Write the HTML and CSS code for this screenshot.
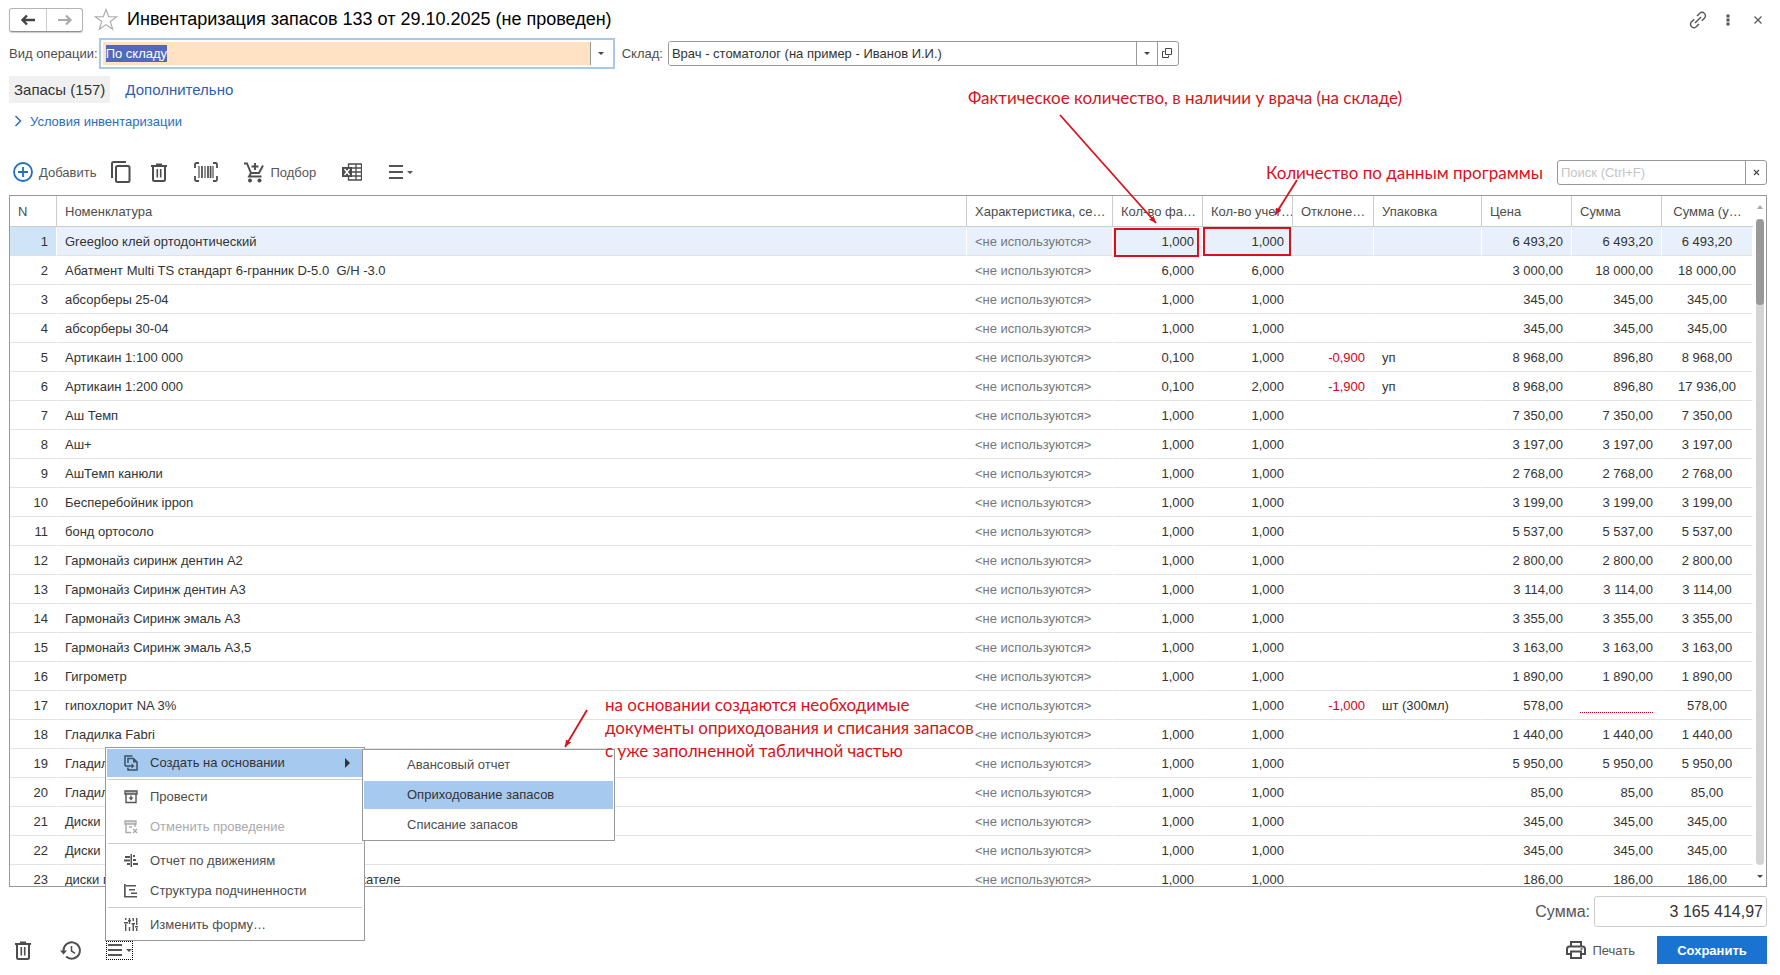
FILE: index.html
```html
<!DOCTYPE html>
<html lang="ru">
<head>
    <meta charset="UTF-8">
    <meta name="viewport" content="width=device-width, initial-scale=1.0">
    <title>Инвентаризация запасов</title>
    <link rel="stylesheet" href="styles.css">
</head>
<body>
<header class="title-bar">
    <div class="nav-buttons">
        <button type="button" aria-label="Назад">
            <svg width="16" height="12" viewBox="0 0 16 12"><path d="M15 6H3M7 1.5L2.5 6L7 10.5" fill="none" stroke="#444" stroke-width="2.4"/></svg>
        </button>
        <button type="button" aria-label="Вперед">
            <svg width="16" height="12" viewBox="0 0 16 12"><path d="M1 6h12M9 1.5L13.5 6L9 10.5" fill="none" stroke="#aaa" stroke-width="2.2"/></svg>
        </button>
    </div>
    <button type="button" class="icon-button star" aria-label="Избранное">
        <svg width="24" height="23" viewBox="0 0 24 23"><path d="M12 1.5l2.7 7.3h8l-6.4 4.7 2.4 7.8L12 16.6l-6.7 4.7 2.4-7.8L1.3 8.8h8z" fill="#fff" stroke="#aaa" stroke-width="1.1"/></svg>
    </button>
    <h1>Инвентаризация запасов 133 от 29.10.2025 (не проведен)</h1>
    <div class="window-buttons">
        <button type="button" class="icon-button" aria-label="Ссылка">
            <svg width="18" height="18" viewBox="0 0 18 18" fill="none" stroke="#555" stroke-width="1.4"><path d="M6 12l6-6M8 5l2.6-2.6a3.2 3.2 0 0 1 4.8 0a3.2 3.2 0 0 1 0 4.8L12.8 9.8M10 13l-2.6 2.6a3.2 3.2 0 0 1-4.8 0a3.2 3.2 0 0 1 0-4.8L5.2 8.2"/></svg>
        </button>
        <button type="button" class="icon-button" aria-label="Еще">
            <svg width="18" height="18" viewBox="0 0 18 18" fill="#555"><rect x="7.5" y="3.5" width="3" height="3"/><rect x="7.5" y="7.5" width="3" height="3"/><rect x="7.5" y="11.5" width="3" height="3"/></svg>
        </button>
        <button type="button" class="icon-button" aria-label="Закрыть">
            <svg width="18" height="18" viewBox="0 0 18 18"><path d="M5.5 5.5l7 7M12.5 5.5l-7 7" stroke="#555" stroke-width="1.2"/></svg>
        </button>
    </div>
</header>

<form class="fields">
    <label for="operation">Вид операции:</label>
    <div class="combo combo-active">
        <select id="operation">
            <option>По складу</option>
        </select>
        <button type="button" aria-label="Выбрать вид операции"><span class="arrow-down"></span></button>
    </div>
    <label for="store">Склад:</label>
    <div class="combo">
        <select id="store">
            <option>Врач - стоматолог (на пример - Иванов И.И.)</option>
        </select>
        <button type="button" aria-label="Выбрать склад"><span class="arrow-down"></span></button>
        <button type="button" aria-label="Открыть склад">
            <svg width="11" height="11" viewBox="0 0 11 11" fill="none" stroke="#444"><path d="M3.5 .5h6v6h-6zM2.5 3.5h-2v6h6v-2"/></svg>
        </button>
    </div>
</form>

<nav class="tabs">
    <a href="#stock" class="tab-active">Запасы (157)</a>
    <a href="#extra">Дополнительно</a>
</nav>

<a href="#conditions" class="conditions">
    <svg width="8" height="12" viewBox="0 0 8 12"><path d="M1.5 1l5 5l-5 5" fill="none" stroke="#2a6ebb" stroke-width="1.5"/></svg>
    Условия инвентаризации
</a>

<div class="toolbar">
    <button type="button" class="tool add">
        <svg width="20" height="20" viewBox="0 0 20 20" fill="none" stroke="#1f6fc5"><circle cx="10" cy="10" r="9" stroke-width="1.8"/><path d="M10 5v10M5 10h10" stroke-width="1.8"/></svg>
        Добавить
    </button>
    <button type="button" class="tool copy" aria-label="Скопировать">
        <svg width="20" height="22" viewBox="0 0 20 22" fill="none" stroke="#4d4d4d" stroke-width="2"><path d="M1 17V2.5Q1 1 2.5 1H15"/><rect x="5" y="5" width="13.5" height="16" rx="1.5"/></svg>
    </button>
    <button type="button" class="tool trash" aria-label="Удалить">
        <svg width="16" height="19" viewBox="0 0 16 19" fill="none" stroke="#4d4d4d" stroke-width="2"><path d="M0 3h16M5 1.5h6M2 4v12.5q0 1.5 1.5 1.5h9q1.5 0 1.5-1.5V4"/><path d="M6.3 6v8.5M9.7 6v8.5" stroke-width="1.6"/></svg>
    </button>
    <button type="button" class="tool barcode" aria-label="Штрихкод">
        <svg width="24" height="20" viewBox="0 0 24 20" fill="none" stroke="#4d4d4d" stroke-width="1.8"><path d="M5 1H2.5Q1 1 1 2.5V6M19 1h2.5q1.5 0 1.5 1.5V6M5 19H2.5Q1 19 1 17.5V14M19 19h2.5q1.5 0 1.5-1.5V14"/><path d="M5 4v12M11 4v12M19 4v12" stroke-width="1.2"/><path d="M8 4v12M14 4v12M16.6 4v12" stroke-width="1.7"/></svg>
    </button>
    <button type="button" class="tool pick">
        <svg width="20" height="21" viewBox="0 0 20 21" fill="none" stroke="#4d4d4d" stroke-width="1.9"><path d="M0 1.5h3L7 11h8l4-7.5M7 11l-2 3.5h12.5M11 1v7M7.5 4.5h7"/><circle cx="6" cy="18.5" r="2" fill="#4d4d4d" stroke="none"/><circle cx="15.5" cy="18.5" r="2" fill="#4d4d4d" stroke="none"/></svg>
        Подбор
    </button>
    <button type="button" class="tool excel" aria-label="Загрузить из Excel">
        <svg width="20" height="18" viewBox="0 0 20 18" fill="none" stroke="#4d4d4d"><path d="M6.5 4V1h13v16h-13v-3M10 5h9.5M10 9h9.5M10 13h9.5M14 1v16" stroke-width="1.3"/><path d="M0 4h10v10H0z" fill="#4d4d4d" stroke="none"/><path d="M2.5 6l5 6M7.5 6l-5 6" stroke="#fff" stroke-width="1.5"/></svg>
    </button>
    <button type="button" class="tool" aria-label="Еще">
        <svg width="24" height="14" viewBox="0 0 24 14" fill="#555"><path d="M0 0h14v2H0zM0 6h14v2H0zM0 12h14v2H0zM18 6h6l-3 3z"/></svg>
    </button>
    <div class="search">
        <input type="text" placeholder="Поиск (Ctrl+F)" aria-label="Поиск">
        <button type="button" aria-label="Очистить">
            <svg width="7" height="7" viewBox="0 0 7 7"><path d="M1 1l5 5M6 1l-5 5" stroke="#444" stroke-width="1.1"/></svg>
        </button>
    </div>
</div>

<main class="grid">
    <div class="grid-scroll">
        <table>
            <colgroup>
                <col class="col-n"><col><col class="col-char"><col class="col-qty"><col class="col-qty">
                <col class="col-diff"><col class="col-pack"><col class="col-qty"><col class="col-qty"><col class="col-last">
            </colgroup>
            <thead>
                <tr>
                    <th>N</th>
                    <th>Номенклатура</th>
                    <th>Характеристика, се…</th>
                    <th>Кол-во фа…</th>
                    <th>Кол-во учет…</th>
                    <th>Отклоне…</th>
                    <th>Упаковка</th>
                    <th>Цена</th>
                    <th>Сумма</th>
                    <th class="center">Сумма (у…</th>
                </tr>
            </thead>
            <tbody id="rows"></tbody>
        </table>
    </div>
    <div class="scrollbar">
        <span class="arrow-up"></span>
        <div class="track"><div class="thumb"></div></div>
        <span class="arrow-down"></span>
    </div>
</main>

<footer>
    <div class="total">
        <label for="total">Сумма:</label>
        <input type="text" id="total" value="3 165 414,97" readonly>
    </div>
    <div class="bottom-bar">
        <button type="button" class="tool trash-bottom" aria-label="Пометить на удаление">
            <svg width="16" height="19" viewBox="0 0 16 19" fill="none" stroke="#4d4d4d" stroke-width="2"><path d="M0 3h16M5 1.5h6M2 4v12.5q0 1.5 1.5 1.5h9q1.5 0 1.5-1.5V4"/><path d="M6.3 6v8.5M9.7 6v8.5" stroke-width="1.6"/></svg>
        </button>
        <button type="button" class="tool history" aria-label="История">
            <svg width="21" height="19" viewBox="0 0 21 19" fill="none" stroke="#4d4d4d" stroke-width="1.9"><path d="M3.5 10.5V9.5a8.2 8.2 0 1 1 2.6 6"/><path d="M0 9.5h7L3.5 13.5z" fill="#4d4d4d" stroke="none"/><path d="M11.5 5v5l3.5 2.3" stroke-width="1.5"/></svg>
        </button>
        <div class="more">
            <button type="button" class="more-button" aria-label="Еще">
                <svg width="24" height="13" viewBox="0 0 24 13" fill="#555"><path d="M0 0h14v2H0zM0 5h14v2H0zM0 10h14v2H0zM18 5h6l-3 3z"/></svg>
            </button>
            <div class="menu">
                <button type="button" class="selected">
                    <svg width="14" height="16" viewBox="0 0 14 16" fill="none" stroke="#3d5266" stroke-width="1.5"><path d="M1 11V1h7.5"/><path d="M4 8V3.5h5.5L13 7v8H4v-2.5M1 11h7"/><path d="M7.5 8.5L10.5 11l-3 2.5zM9 3.5V7.5h4z" fill="#3d5266" stroke="none"/></svg>
                    Создать на основании
                    <span class="arrow-right"></span>
                </button>
                <hr>
                <button type="button">
                    <svg width="14" height="14" viewBox="0 0 14 14" fill="none" stroke="#555" stroke-width="1.4"><path d="M1 1h12v3H1z" fill="#bbb"/><path d="M2 4v8.5h10V4"/><path d="M7 5.5v3"/><path d="M4.5 7.5h5L7 10.5z" fill="#555" stroke="none"/></svg>
                    Провести
                </button>
                <button type="button" disabled>
                    <svg width="14" height="14" viewBox="0 0 14 14" fill="none" stroke="#aaa" stroke-width="1.4"><path d="M1 1h11v3H1z" fill="#ddd"/><path d="M2 4v8.5h5M11 4v3M5 7h3M9 9l4 4M13 9l-4 4"/></svg>
                    Отменить проведение
                </button>
                <hr>
                <button type="button">
                    <svg width="14" height="13" viewBox="0 0 14 13" fill="#555"><path d="M6.5 0H8v13H6.5zM1 2h5v2H1zM0 5.5h6v2H0zM3 9h3v2H3zM9 1h2v2H9zM9 5h3v2H9zM9 9h5v2H9z"/></svg>
                    Отчет по движениям
                </button>
                <button type="button">
                    <svg width="14" height="14" viewBox="0 0 14 14" fill="#555"><path d="M0 0h1.7v12H13v1.6H0zM2 1h10v1.6H2zM5 5h6v1.6H5zM7 8.5h6v1.6H7z"/></svg>
                    Структура подчиненности
                </button>
                <hr>
                <button type="button">
                    <svg width="14" height="13" viewBox="0 0 14 13" fill="#555"><path d="M1 0h1.4v2H1zM0 4h4v1.5H0zM1 6h1.4v7H1zM4.8 0h1.4v6H4.8zM4 2h3v1.5H4zM4.8 9h1.4v4H4.8zM8.5 0H10v3H8.5zM7.7 5H11v1.5H7.7zM8.5 6H10v7H8.5zM12 0h1.4v7H12zM11 8h3v1.5h-3zM12 10h1.4v3H12z"/></svg>
                    Изменить форму…
                </button>
                <div class="submenu">
                    <button type="button">Авансовый отчет</button>
                    <button type="button" class="selected">Оприходование запасов</button>
                    <button type="button">Списание запасов</button>
                </div>
            </div>
        </div>
        <button type="button" class="tool print">
            <svg width="20" height="18" viewBox="0 0 20 18" fill="none" stroke="#4d4d4d" stroke-width="2"><path d="M5 5V1h10v4M5 13H1V8q0-2.5 2.5-2.5h13Q19 5.5 19 8v5h-4M5 10.5h10V17H5z"/><path d="M14.5 8h2" stroke-width="1.5"/></svg>
            Печать
        </button>
        <button type="button" class="save">Сохранить</button>
    </div>
</footer>

<!-- notes drawn over the form -->
<div class="notes">
    <p class="note note-fact">Фактическое количество, в наличии у врача (на складе)</p>
    <p class="note note-program">Количество по данным программы</p>
    <p class="note note-docs">на основании создаются необходимые<br>документы оприходования и списания запасов<br>с уже заполненной табличной частью</p>
    <svg class="arrows" width="1780" height="975" viewBox="0 0 1780 975" fill="none" stroke="#d8121a" stroke-width="1.8">
        <defs>
            <marker id="tip" markerUnits="userSpaceOnUse" markerWidth="8" markerHeight="8" refX="7" refY="4" orient="auto"><path d="M0 1L7 4L0 7z" fill="#d8121a" stroke="none"/></marker>
        </defs>
        <path d="M1060 115L1156 223" marker-end="url(#tip)"/>
        <path d="M1297 180L1275 215" marker-end="url(#tip)"/>
        <path d="M587 710L565 747" marker-end="url(#tip)"/>
        <rect x="1115" y="229" width="83" height="27" stroke-width="2"/>
        <rect x="1204" y="228" width="86" height="27" stroke-width="2"/>
    </svg>
</div>

<script>
    // name, fact, accounted, difference, package, price, sum, sum (accounted)
    const items = [
        ['Greegloo клей ортодонтический', '1,000', '1,000', '', '', '6 493,20', '6 493,20', '6 493,20'],
        ['Абатмент Multi TS стандарт 6-гранник D-5.0\u00a0 G/H -3.0', '6,000', '6,000', '', '', '3 000,00', '18 000,00', '18 000,00'],
        ['абсорберы 25-04', '1,000', '1,000', '', '', '345,00', '345,00', '345,00'],
        ['абсорберы 30-04', '1,000', '1,000', '', '', '345,00', '345,00', '345,00'],
        ['Артикаин 1:100 000', '0,100', '1,000', '-0,900', 'уп', '8 968,00', '896,80', '8 968,00'],
        ['Артикаин 1:200 000', '0,100', '2,000', '-1,900', 'уп', '8 968,00', '896,80', '17 936,00'],
        ['Аш Темп', '1,000', '1,000', '', '', '7 350,00', '7 350,00', '7 350,00'],
        ['Аш+', '1,000', '1,000', '', '', '3 197,00', '3 197,00', '3 197,00'],
        ['АшТемп канюли', '1,000', '1,000', '', '', '2 768,00', '2 768,00', '2 768,00'],
        ['Бесперебойник ippon', '1,000', '1,000', '', '', '3 199,00', '3 199,00', '3 199,00'],
        ['бонд ортосоло', '1,000', '1,000', '', '', '5 537,00', '5 537,00', '5 537,00'],
        ['Гармонайз сиринж дентин А2', '1,000', '1,000', '', '', '2 800,00', '2 800,00', '2 800,00'],
        ['Гармонайз Сиринж дентин А3', '1,000', '1,000', '', '', '3 114,00', '3 114,00', '3 114,00'],
        ['Гармонайз Сиринж эмаль А3', '1,000', '1,000', '', '', '3 355,00', '3 355,00', '3 355,00'],
        ['Гармонайз Сиринж эмаль А3,5', '1,000', '1,000', '', '', '3 163,00', '3 163,00', '3 163,00'],
        ['Гигрометр', '1,000', '1,000', '', '', '1 890,00', '1 890,00', '1 890,00'],
        ['гипохлорит NA 3%', '', '1,000', '-1,000', 'шт (300мл)', '578,00', '', '578,00'],
        ['Гладилка Fabri', '1,000', '1,000', '', '', '1 440,00', '1 440,00', '1 440,00'],
        ['Гладилка', '1,000', '1,000', '', '', '5 950,00', '5 950,00', '5 950,00'],
        ['Гладилка', '1,000', '1,000', '', '', '85,00', '85,00', '85,00'],
        ['Диски', '1,000', '1,000', '', '', '345,00', '345,00', '345,00'],
        ['Диски', '1,000', '1,000', '', '', '345,00', '345,00', '345,00'],
        ['диски полировальные 14 на металлическом держателе', '1,000', '1,000', '', '', '186,00', '186,00', '186,00']
    ];

    const rows = document.getElementById('rows');
    items.forEach((item, index) => {
        const sum = item[6] || '<span class="required"></span>';
        const row = `
        <tr>
            <td class="num">${index + 1}</td>
            <td>${item[0]}</td>
            <td class="unused">&lt;не используются&gt;</td>
            <td class="num">${item[1]}</td>
            <td class="num">${item[2]}</td>
            <td class="num negative">${item[3]}</td>
            <td>${item[4]}</td>
            <td class="num">${item[5]}</td>
            <td class="num">${sum}</td>
            <td class="center">${item[7]}</td>
        </tr>
    `;
        rows.insertAdjacentHTML('beforeend', row);
    });
</script>
</body>
</html>
```

FILE: styles.css
```css
* {
    box-sizing: border-box;
}

body {
    display: flex;
    flex-direction: column;
    height: 100vh;
    margin: 0;
    padding: 8px 13px 11px 9px;
    font-family: "Liberation Sans", Arial, sans-serif;
    font-size: 13px;
    color: #333;
    background-color: #fff;
}

button, input, select {
    font: inherit;
    color: inherit;
    margin: 0;
}

button {
    display: flex;
    align-items: center;
    padding: 0;
    border: none;
    background: none;
    cursor: pointer;
}

svg {
    flex: none;
}

a {
    color: #2c5fb3;
    text-decoration: none;
}

/* title */
.title-bar {
    display: flex;
    align-items: center;
    height: 23px;
    margin-bottom: 7px;
}

.title-bar h1 {
    flex: 1;
    margin: 0;
    font-size: 18px;
    font-weight: normal;
    color: #000;
}

.nav-buttons {
    display: flex;
    height: 24px;
    border: 1px solid #b4b4b4;
    border-bottom-color: #909090;
    border-radius: 3px;
    box-shadow: 0 1px 1px #ccc;
}

.nav-buttons button {
    width: 36px;
    justify-content: center;
}

.nav-buttons button + button {
    border-left: 1px solid #ccc;
}

.star {
    margin: 0 9px 0 11px;
}

.window-buttons {
    display: flex;
    gap: 12px;
}

/* fields */
.fields {
    display: flex;
    align-items: center;
    height: 31px;
    margin-bottom: 7px;
    color: #4d4d4d;
}

.fields label {
    margin-right: 5px;
}

.fields label:first-child {
    margin-right: 1px;
}

.combo {
    display: flex;
    width: 511px;
    height: 25px;
    border: 1px solid #999;
    border-radius: 3px;
    overflow: hidden;
}

.combo select {
    flex: 1;
    min-width: 0;
    padding: 0 3px;
    border: none;
    outline: none;
    appearance: none;
    background-color: #fff;
    color: #333;
}

.combo button {
    width: 21px;
    justify-content: center;
    border-left: 1px solid #999;
}

.combo-active {
    width: 516px;
    height: 31px;
    margin-right: 7px;
    padding: 2px;
    border: 2px solid #a8c8ea;
    border-radius: 0;
}

.combo-active select {
    color: #fff;
    background: linear-gradient(#5368bc, #5368bc) 3px center / 61px 17px no-repeat, #fee2c3;
}

.arrow-down {
    border: 3px solid transparent;
    border-top: 3px solid #444;
    border-bottom: 0;
}

.arrow-up {
    border: 3px solid transparent;
    border-bottom: 4px solid #aaa;
    border-top: 0;
}

.arrow-right {
    margin-left: auto;
    border: 5px solid transparent;
    border-left: 5px solid #333;
    border-right: 0;
}

/* tabs */
.tabs {
    display: flex;
    gap: 10px;
    font-size: 15px;
    line-height: 27px;
}

.tabs a {
    padding: 0 5px;
}

.tabs .tab-active {
    color: #333;
    background-color: #f0f0f0;
}

.conditions {
    display: flex;
    align-items: center;
    align-self: flex-start;
    gap: 8px;
    height: 20px;
    margin: 8px 0 28px 5px;
    color: #2a6ebb;
}

/* toolbar */
.toolbar {
    display: flex;
    align-items: center;
    height: 26px;
    margin-bottom: 10px;
    padding-left: 4px;
}

.tool {
    gap: 6px;
    color: #555;
}

.add {
    margin-right: 15px;
}

.copy {
    margin-right: 20px;
}

.trash, .excel {
    margin-right: 27px;
}

.pick, .barcode {
    margin-right: 26px;
}

.search {
    display: flex;
    width: 210px;
    height: 25px;
    margin-left: auto;
    border: 1px solid #999;
    border-radius: 3px;
}

.search input {
    flex: 1;
    min-width: 0;
    padding: 0 3px;
    border: none;
    outline: none;
    background: none;
}

.search input::placeholder {
    color: #c4c4c4;
}

.search button {
    width: 21px;
    justify-content: center;
    border-left: 1px solid #999;
}

/* table */
.grid {
    display: flex;
    flex: 1;
    min-height: 0;
    border: 1px solid #999;
}

.grid-scroll {
    flex: 1;
    overflow: hidden;
}

table {
    width: 100%;
    table-layout: fixed;
    border-collapse: separate;
    border-spacing: 0;
}

.col-n {
    width: 47px;
}

.col-char {
    width: 146px;
}

.col-qty {
    width: 90px;
}

.col-diff {
    width: 81px;
}

.col-pack {
    width: 108px;
}

.col-last {
    width: 91px;
}

th, td {
    height: 29px;
    padding: 0 8px;
    text-align: left;
    white-space: nowrap;
    overflow: hidden;
    border-right: 1px solid #fff;
    border-bottom: 1px solid #e2e2e2;
}

th {
    height: 31px;
    font-weight: normal;
    color: #4d4d4d;
    border-color: #ccc;
}

th:last-child {
    border-right: none;
}

.num {
    text-align: right;
}

.center {
    text-align: center;
}

.unused {
    color: #777;
}

.negative {
    color: #d4001a;
}

tbody tr:first-child td {
    background-color: #e8f1fb;
}

tbody tr:first-child td:first-child {
    background-color: #d0e4f8;
}

.required {
    display: block;
    height: 16px;
    border-bottom: 1px dotted #c00020;
}

.scrollbar {
    display: flex;
    flex-direction: column;
    align-items: center;
    width: 13px;
    padding: 9px 0 8px;
}

.track {
    flex: 1;
    width: 8px;
    margin: 10px 0;
    border-radius: 4px;
    background-color: #d4d4d4;
}

.thumb {
    width: 8px;
    height: 86px;
    border-radius: 4px;
    background-color: #999;
}

/* bottom */
.total {
    display: flex;
    align-items: center;
    justify-content: flex-end;
    gap: 4px;
    margin: 9px 0;
    font-size: 16px;
    color: #555;
}

.total input {
    width: 173px;
    height: 31px;
    padding: 0 3px;
    border: 1px solid #ccc;
    border-radius: 3px;
    text-align: right;
    color: #333;
}

.bottom-bar {
    display: flex;
    align-items: center;
    height: 28px;
    padding-left: 6px;
}

.trash-bottom {
    margin-right: 29px;
}

.history {
    margin-right: 25px;
}

.more {
    position: relative;
}

.more-button {
    width: 27px;
    height: 19px;
    padding-left: 1px;
    border: 1px dotted #000;
}

.print {
    margin-left: auto;
    margin-right: 22px;
}

.save {
    width: 110px;
    height: 28px;
    justify-content: center;
    font-weight: bold;
    color: #fff;
    background-color: #1a73d0;
}

.menu, .submenu {
    position: absolute;
    border: 1px solid #999;
    background-color: #fff;
}

.menu {
    left: -1px;
    bottom: 19px;
    width: 260px;
    z-index: 1;
}

.submenu {
    left: 256px;
    top: 1px;
    width: 253px;
}

.menu button {
    width: 100%;
    height: 30px;
    gap: 12px;
    padding: 0 13px 0 17px;
    border: 1px solid #fff;
    color: #4d4d4d;
}

.submenu button {
    padding-left: 43px;
}

.menu .selected {
    background-color: #a6c9f0;
    color: #333;
}

.menu button:disabled {
    color: #aaa;
}

.menu hr {
    margin: 1px 2px 2px;
    border: none;
    border-top: 1px solid #ccc;
}

/* notes */
.notes {
    position: absolute;
    top: 0;
    left: 0;
    z-index: 2;
    pointer-events: none;
}

.arrows {
    display: block;
}

.note {
    position: absolute;
    margin: 0;
    font-family: Lato, sans-serif;
    font-size: 17px;
    line-height: 23px;
    white-space: nowrap;
    color: #d8121a;
}

.note-fact {
    left: 968px;
    top: 86px;
}

.note-program {
    left: 1266px;
    top: 161px;
}

.note-docs {
    left: 605px;
    top: 693px;
}
```
